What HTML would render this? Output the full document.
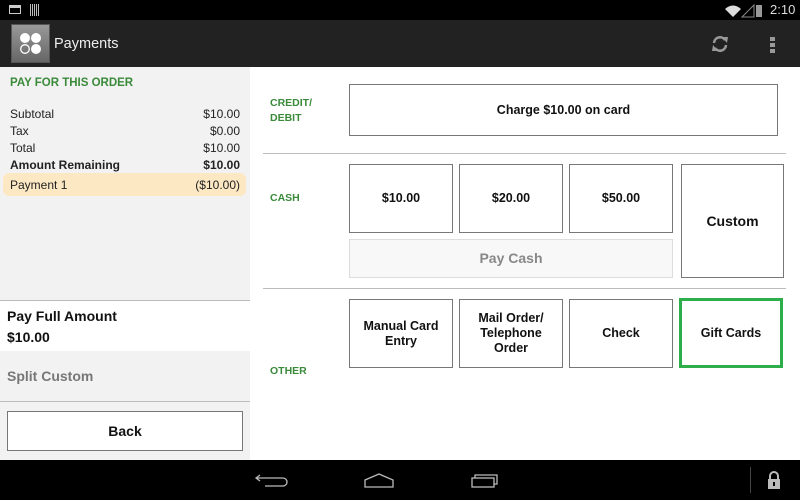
<!DOCTYPE html>
<html><head><style>
*{margin:0;padding:0;box-sizing:border-box}
body{width:800px;height:500px;overflow:hidden;background:#fff;font-family:"Liberation Sans",Arial,sans-serif;position:relative}
.a{position:absolute}
.btn{position:absolute;border:1px solid #777;background:#fff;display:flex;align-items:center;justify-content:center;text-align:center;font-weight:bold;font-size:12.5px;color:#111;line-height:15px}
.lbl{position:absolute;color:#3a8a3a;font-weight:bold;font-size:10.5px;line-height:15px}
.row{position:absolute;left:10px;width:230px;font-size:12px;color:#222;display:flex;justify-content:space-between}
.hr{position:absolute;height:1px;background:#bbb}
</style></head><body>
<div class="a" style="left:0;top:0;width:800px;height:20px;background:#000"></div>
<div class="a" style="left:9px;top:5px;width:12px;height:9px;border:1.5px solid #ccc;border-top-width:3px"></div>
<div class="a" style="left:30px;top:4px;width:10px;height:12px;background:repeating-linear-gradient(90deg,#bbb 0 1px,#000 1px 2px)"></div>
<svg class="a" style="left:724px;top:3px" width="40" height="16"><path d="M1 6 Q9 -1 17 6 L9 14Z" fill="#ddd"/><path d="M18 14 L30 2 L30 14Z" fill="none" stroke="#888"/><rect x="32" y="2" width="6" height="12" fill="#999"/></svg>
<div class="a" style="left:770px;top:2px;color:#ddd;font-size:13px">2:10</div>
<div class="a" style="left:0;top:20px;width:800px;height:47px;background:#222"></div>
<div class="a" style="left:11px;top:24px;width:39px;height:39px;background:linear-gradient(#999,#666);border:1px solid #555"></div>
<svg class="a" style="left:11px;top:24px" width="39" height="39"><circle cx="14" cy="14" r="5" fill="#fff"/><circle cx="25" cy="14" r="5" fill="#fff"/><circle cx="25" cy="25" r="5" fill="#fff"/><circle cx="14" cy="25" r="4.3" fill="none" stroke="#fff" stroke-width="1.3"/></svg>
<div class="a" style="left:54px;top:36px;color:#eee;font-size:14.5px">Payments</div>
<svg class="a" style="left:710px;top:34px" width="20" height="20"><path d="M4 9 A6 6 0 0 1 15 6" fill="none" stroke="#999" stroke-width="2.5"/><path d="M16 11 A6 6 0 0 1 5 14" fill="none" stroke="#999" stroke-width="2.5"/><path d="M12 3 L18 3 L17 9Z M8 17 L2 17 L3 11Z" fill="#999"/></svg>
<div class="a" style="left:770px;top:37px;width:5px;height:4px;background:#999;box-shadow:0 6px #999,0 12px #999"></div>
<div class="a" style="left:0;top:67px;width:250px;height:393px;background:#f2f2f2"></div>
<div class="a" style="left:10px;top:77px;color:#3a8a3a;font-weight:bold;font-size:11.5px">PAY FOR THIS ORDER</div>
<div class="row" style="top:107px"><span>Subtotal</span><span>$10.00</span></div>
<div class="row" style="top:124px"><span>Tax</span><span>$0.00</span></div>
<div class="row" style="top:141px"><span>Total</span><span>$10.00</span></div>
<div class="row" style="top:158px;font-weight:bold"><span>Amount Remaining</span><span>$10.00</span></div>
<div class="a" style="left:3px;top:173px;width:243px;height:23px;background:#fde8c4;border-radius:6px"></div>
<div class="row" style="top:178px"><span>Payment 1</span><span>($10.00)</span></div>
<div class="hr" style="left:0;top:300px;width:250px"></div>
<div class="a" style="left:0;top:301px;width:250px;height:50px;background:#fff"></div>
<div class="a" style="left:7px;top:306px;font-weight:bold;font-size:14px;line-height:21px;color:#111">Pay Full Amount<br>$10.00</div>
<div class="a" style="left:7px;top:368px;font-weight:bold;font-size:14px;color:#777">Split Custom</div>
<div class="hr" style="left:0;top:401px;width:250px"></div>
<div class="btn" style="left:7px;top:411px;width:236px;height:40px;font-size:14px">Back</div>
<div class="lbl" style="left:270px;top:96px">CREDIT/<br>DEBIT</div>
<div class="btn" style="left:349px;top:84px;width:429px;height:52px">Charge $10.00 on card</div>
<div class="hr" style="left:263px;top:153px;width:523px"></div>
<div class="lbl" style="left:270px;top:191px">CASH</div>
<div class="btn" style="left:349px;top:164px;width:104px;height:69px">$10.00</div>
<div class="btn" style="left:459px;top:164px;width:104px;height:69px">$20.00</div>
<div class="btn" style="left:569px;top:164px;width:104px;height:69px">$50.00</div>
<div class="btn" style="left:681px;top:164px;width:103px;height:114px;font-size:14px">Custom</div>
<div class="btn" style="left:349px;top:239px;width:324px;height:39px;border-color:#ddd;background:#f8f8f8;color:#888;font-size:14px">Pay Cash</div>
<div class="hr" style="left:263px;top:288px;width:523px"></div>
<div class="btn" style="left:349px;top:299px;width:104px;height:69px">Manual Card<br>Entry</div>
<div class="btn" style="left:459px;top:299px;width:104px;height:69px">Mail Order/<br>Telephone<br>Order</div>
<div class="btn" style="left:569px;top:299px;width:104px;height:69px">Check</div>
<div class="btn" style="left:679px;top:298px;width:104px;height:70px;border:3px solid #2eae4a">Gift Cards</div>
<div class="lbl" style="left:270px;top:364px">OTHER</div>
<div class="a" style="left:0;top:460px;width:800px;height:40px;background:#000"></div>
<svg class="a" style="left:255px;top:468px" width="260" height="26"><path d="M5 7 L1 10 L5 13 M1 10 L28 10 A4 4 0 0 1 28 18 L10 18" fill="none" stroke="#bbb" stroke-width="1.3"/><path d="M110 12 L124 6 L138 12 L138 19 L110 19Z" fill="none" stroke="#bbb" stroke-width="1.3"/><rect x="217" y="10" width="22" height="9" fill="none" stroke="#bbb" stroke-width="1.3"/><path d="M220 10 L220 7 L242 7 L242 16 L239 16" fill="none" stroke="#bbb" stroke-width="1.3"/></svg>
<div class="a" style="left:750px;top:467px;width:1px;height:26px;background:#444"></div>
<svg class="a" style="left:765px;top:470px" width="18" height="20"><path d="M5 9 V6 A4 4 0 0 1 13 6 V9" fill="none" stroke="#bbb" stroke-width="2"/><rect x="3" y="9" width="12" height="10" fill="#bbb"/><rect x="8" y="12" width="2" height="4" fill="#000"/></svg>
</body></html>
